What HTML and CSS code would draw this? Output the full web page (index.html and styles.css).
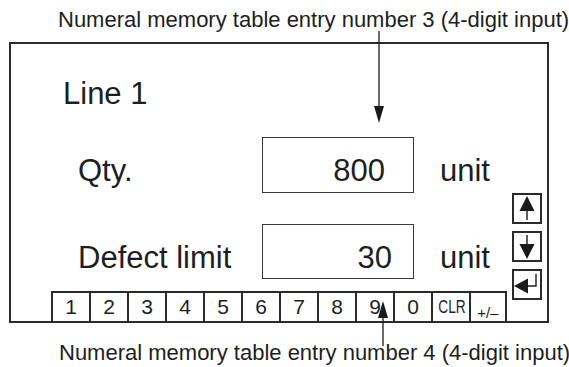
FILE: index.html
```html
<!DOCTYPE html>
<html lang="en">
<head>
    <meta charset="UTF-8">
    <meta name="viewport" content="width=device-width, initial-scale=1.0">
    <title>Numeral memory input screen</title>
    <link rel="stylesheet" href="styles.css">
</head>
<body>

    <div class="figure">
        <p class="caption caption-top">Numeral memory table entry number 3 (4-digit input)</p>

        <div class="screen">
            <div class="main">
                <div class="title">Line 1</div>

                <div class="row row-qty">
                    <span class="label">Qty.</span>
                    <span class="value">800</span>
                    <span class="unit">unit</span>
                </div>

                <div class="row row-limit">
                    <span class="label">Defect limit</span>
                    <span class="value value-short">30</span>
                    <span class="unit">unit</span>
                </div>

                <div class="keys">
                    <span class="key">1</span>
                    <span class="key">2</span>
                    <span class="key">3</span>
                    <span class="key">4</span>
                    <span class="key">5</span>
                    <span class="key">6</span>
                    <span class="key">7</span>
                    <span class="key">8</span>
                    <span class="key">9</span>
                    <span class="key">0</span>
                    <span class="key key-clr"><span class="narrow">CLR</span></span>
                    <span class="key key-sign">+/&ndash;</span>
                </div>
            </div>

            <div class="side">
                <span class="btn">
                    <svg width="26" height="27" viewBox="0 0 26 27">
                        <polygon points="13,1 5.5,16 20.5,16" fill="#1a1a1a"/>
                        <line x1="13" y1="15" x2="13" y2="25" stroke="#1a1a1a" stroke-width="1.4"/>
                    </svg>
                </span>
                <span class="btn">
                    <svg width="26" height="27" viewBox="0 0 26 27">
                        <line x1="13" y1="2" x2="13" y2="12" stroke="#1a1a1a" stroke-width="1.4"/>
                        <polygon points="13,26 5.5,11 20.5,11" fill="#1a1a1a"/>
                    </svg>
                </span>
                <span class="btn">
                    <svg width="26" height="27" viewBox="0 0 26 27">
                        <polygon points="0,15 14,7.5 14,22.5" fill="#1a1a1a"/>
                        <polyline points="13,15 22,15 22,3" fill="none" stroke="#1a1a1a" stroke-width="1.4"/>
                    </svg>
                </span>
            </div>
        </div>

        <p class="caption caption-bottom">Numeral memory table entry number 4 (4-digit input)</p>

        <!-- leader arrows drawn over the screen -->
        <svg class="leaders" width="569" height="367" viewBox="0 0 569 367">
            <line x1="379" y1="31" x2="379" y2="110" stroke="#1a1a1a" stroke-width="1.3"/>
            <polygon points="379,123 374,106 384,106" fill="#1a1a1a"/>
            <line x1="383" y1="314" x2="383" y2="346" stroke="#1a1a1a" stroke-width="1.3"/>
            <polygon points="383,301 378,318 388,318" fill="#1a1a1a"/>
        </svg>
    </div>

</body>
</html>
```

FILE: styles.css
```css
body {
    margin: 0;
    background: #fff;
    color: #1e1e1e;
    font-family: "Liberation Sans", Arial, sans-serif;
}
.figure {
    position: relative;
    width: 569px;
    height: 367px;
    overflow: hidden;
}
.caption {
    margin: 0;
    font-size: 22px;
    line-height: 26px;
    white-space: nowrap;
}
.caption-top {
    padding: 7px 0 0 58px;
}
.caption-bottom {
    padding: 17px 0 0 59px;
}
.screen {
    display: flex;
    box-sizing: border-box;
    width: 540px;
    height: 281px;
    margin: 9px 0 0 9px;
    border: 2px solid #2a2a2a;
}
.main {
    flex: 1;
    display: flex;
    flex-direction: column;
    padding-top: 33px;
    font-size: 31px;
    line-height: 34px;
}
.title {
    padding-left: 52px;
}
.row {
    display: flex;
    align-items: baseline;
    padding-left: 67px;
}
.row-qty {
    margin-top: 26px;
}
.row-limit {
    margin-top: 31px;
}
.label {
    width: 184px;
}
.value {
    box-sizing: border-box;
    width: 152px;
    height: 56px;
    padding: 16px 28px 0 0;
    border: 1px solid #3a3a3a;
    text-align: right;
}
.value-short {
    height: 55px;
    padding-right: 21px;
}
.unit {
    margin-left: 26px;
}
.keys {
    display: flex;
    margin: auto 0 0 40px;
    height: 30px;
}
.key {
    box-sizing: border-box;
    width: 38px;
    padding-top: 2px;
    border-top: 2px solid #2a2a2a;
    border-left: 2px solid #2a2a2a;
    font-size: 21px;
    line-height: 24px;
    text-align: center;
}
.key:last-child {
    border-right: 2px solid #2a2a2a;
}
.key-clr {
    padding-top: 1px;
}
.narrow {
    display: inline-block;
    font-size: 19px;
    transform: scaleX(0.72);
}
.key-sign {
    padding-top: 8px;
    font-size: 15px;
}
.side {
    display: flex;
    flex-direction: column;
    gap: 7px;
    margin: 149px 5px 0 0;
}
.btn {
    display: flex;
    box-sizing: border-box;
    width: 30px;
    height: 31px;
    border: 2px solid #2a2a2a;
}
.leaders {
    position: absolute;
    left: 0;
    top: 0;
}
```
